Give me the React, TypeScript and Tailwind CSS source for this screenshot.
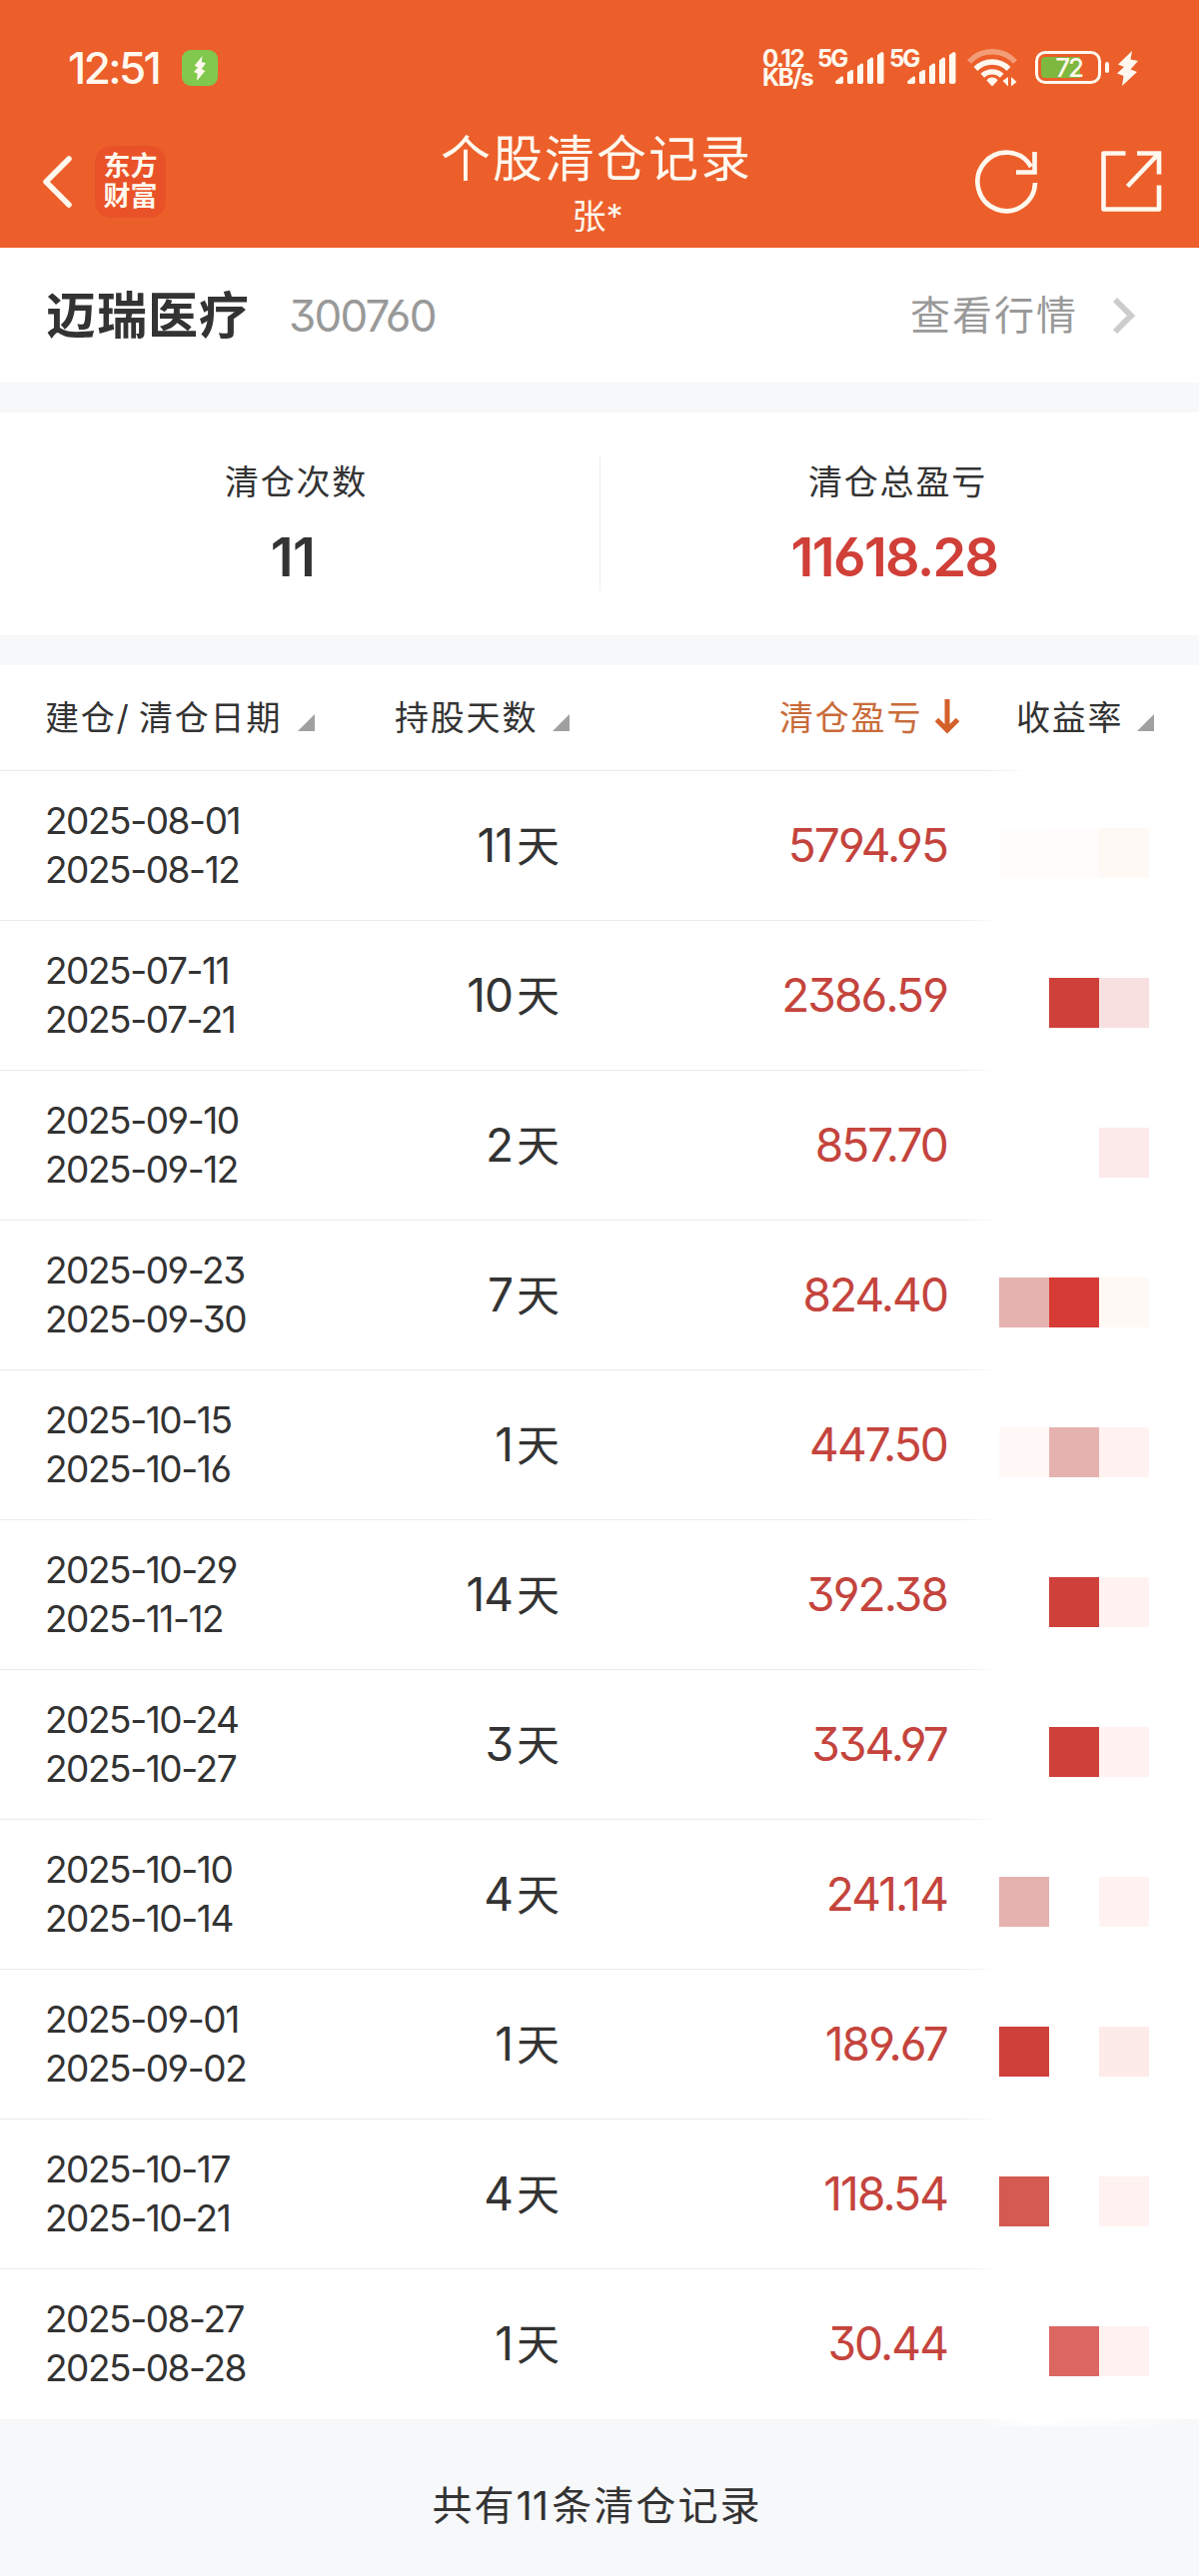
import { clsx } from "clsx";

interface ClearRecord {
    openDate: string;
    closeDate: string;
    days: number;
    profit: string;
    mask: [string, string, string];
}

const RECORDS: ClearRecord[] = [
    { openDate: "2025-08-01", closeDate: "2025-08-12", days: 11, profit: "5794.95", mask: ["bg-[#fffdfc]", "bg-[#fffcfb]", "bg-[#fff9f6]"] },
    { openDate: "2025-07-11", closeDate: "2025-07-21", days: 10, profit: "2386.59", mask: ["", "bg-[#cf403a]", "bg-[#f9e0e0]"] },
    { openDate: "2025-09-10", closeDate: "2025-09-12", days: 2, profit: "857.70", mask: ["", "", "bg-[#fdeaea]"] },
    { openDate: "2025-09-23", closeDate: "2025-09-30", days: 7, profit: "824.40", mask: ["bg-[#e5b3af]", "bg-[#d63c35]", "bg-[#fff9f6]"] },
    { openDate: "2025-10-15", closeDate: "2025-10-16", days: 1, profit: "447.50", mask: ["bg-[#fff8f6]", "bg-[#e6b2b0]", "bg-[#fff2f1]"] },
    { openDate: "2025-10-29", closeDate: "2025-11-12", days: 14, profit: "392.38", mask: ["", "bg-[#cf403a]", "bg-[#fff2f1]"] },
    { openDate: "2025-10-24", closeDate: "2025-10-27", days: 3, profit: "334.97", mask: ["", "bg-[#cf403a]", "bg-[#fff2f1]"] },
    { openDate: "2025-10-10", closeDate: "2025-10-14", days: 4, profit: "241.14", mask: ["bg-[#e6b2b0]", "", "bg-[#fff2f1]"] },
    { openDate: "2025-09-01", closeDate: "2025-09-02", days: 1, profit: "189.67", mask: ["bg-[#cf403a]", "", "bg-[#fdebea]"] },
    { openDate: "2025-10-17", closeDate: "2025-10-21", days: 4, profit: "118.54", mask: ["bg-[#d55a51]", "", "bg-[#fff2f0]"] },
    { openDate: "2025-08-27", closeDate: "2025-08-28", days: 1, profit: "30.44", mask: ["", "bg-[#db6662]", "bg-[#fff2f1]"] },
];

function SignalBars() {
    return (
        <svg width="49" height="32" viewBox="0 0 49 32" fill="currentColor" className="-ml-[11px] mt-[3px]">
            <path d="M0 29.5 L6 24.5 Q8 24 8 25.5 V30 Q8 32 6 32 H1.5 Q0 32 0 29.5Z" />
            <path d="M12 20.5 L16 18 Q18 17.5 18 19 V30 Q18 32 15 32 Q12 32 12 30Z" />
            <path d="M22 14.5 L26 11.5 Q28 11 28 13 V30 Q28 32 25 32 Q22 32 22 30Z" />
            <path d="M32 8.5 L36 5.5 Q38 5 38 7 V30 Q38 32 35 32 Q32 32 32 30Z" />
            <path d="M42 3 L46.5 0 Q48.5 0 48.5 2 V30 Q48.5 32 45 32 Q42 32 42 30Z" />
        </svg>
    );
}

function WifiIcon() {
    return (
        <svg width="51" height="38" viewBox="0 0 51 38" fill="none" stroke="currentColor" strokeWidth="5.4">
            <path d="M2 13 A31 31 0 0 1 48 13" opacity="0.4" />
            <path d="M8.5 20 A23 23 0 0 1 41.5 20" />
            <path d="M15.3 26.8 A14 14 0 0 1 34.7 26.8" />
            <path d="M25 28.5 Q29 28.5 30.5 31.5 L26 36.5 Q25 37.5 24 36.5 L19.5 31.5 Q21 28.5 25 28.5Z" fill="currentColor" stroke="none" />
            <path d="M41 28 V37.5 L35.5 32Z M44 37.5 V28 L49.5 33Z" fill="currentColor" stroke="none" />
        </svg>
    );
}

function Bolt({ className }: { className?: string }) {
    return (
        <svg viewBox="0 0 21 35" preserveAspectRatio="none" fill="currentColor" className={className}>
            <path d="M15 0 L1 13.5 L7 16 L0 22.5 L6.5 25 L5 35 L20 21 L13.5 18.5 L21 10 L13.5 8.5Z" />
        </svg>
    );
}

function StatusBar() {
    return (
        <div className="flex h-[96px] items-start pt-[49px] pl-[68px]">
            <div className="w-[114px] text-[44px] font-medium leading-[38px] tracking-[-2.6px]">12:51</div>
            <div className="mt-px flex h-9 w-[36px] items-center justify-center rounded-[9px] bg-[#80c94c]">
                <Bolt className="h-[25px] w-[12px]" />
            </div>
            <div className="ml-[545px] flex items-start">
                <div className="w-[55px] text-[24px] font-bold leading-[19px] tracking-[-1.4px]">
                    <div>0.12</div>
                    <div>KB/s</div>
                </div>
                <div className="flex w-[72px]">
                    <span className="w-[29px] text-[24px] font-bold leading-[20px] tracking-[-2px]">5G</span>
                    <SignalBars />
                </div>
                <div className="flex w-[78px]">
                    <span className="w-[29px] text-[24px] font-bold leading-[20px] tracking-[-2px]">5G</span>
                    <SignalBars />
                </div>
                <WifiIcon />
                <div className="mt-[2px] ml-[17px] flex h-[33px] w-[66px] items-center rounded-[10px] border-[3px] border-current p-[3px]">
                    <div className="flex h-full w-[39px] items-center justify-end rounded-l-[4px] bg-[#7fb83e]">
                        <span className="-mr-[2px] text-[26px] font-medium tracking-[-2px]">72</span>
                    </div>
                </div>
                <div className="mt-[13px] ml-[4px] h-[11px] w-[4px] rounded-sm bg-current" />
                <Bolt className="mt-[2px] ml-[8px] h-[35px] w-[21px]" />
            </div>
        </div>
    );
}

function NavBar() {
    return (
        <div className="flex h-[152px] items-start">
            <div className="flex w-[400px] items-center pt-[50px] pl-[42px]">
                <svg width="31" height="52" viewBox="0 0 31 52" fill="none" stroke="currentColor" strokeWidth="5.5" strokeLinecap="round" strokeLinejoin="round">
                    <path d="M27 3 L4 26 L27 49" />
                </svg>
                <div className="ml-[22px] flex h-[72px] w-[71px] items-center justify-center rounded-[16px] bg-[#e95228] text-[27px] font-bold leading-[30px]">
                    <div>
                        <div>东方</div>
                        <div>财富</div>
                    </div>
                </div>
            </div>
            <div className="w-[400px] pt-[33px] text-center">
                <div className="-mr-[2px] -ml-[8px] text-[50px] leading-[60px] tracking-[2px]">个股清仓记录</div>
                <div className="-ml-[4px] text-[34px] leading-[56px]">张*</div>
            </div>
            <div className="flex w-[400px] pt-[52px] pl-[176px]">
                <svg width="66" height="66" viewBox="0 0 66 66" fill="none" stroke="currentColor" strokeWidth="4.6">
                    <path d="M60 35 A28.8 29.3 0 1 1 56 19" />
                    <path d="M59.5 4 V24.5 H41" />
                </svg>
                <svg width="62" height="64" viewBox="0 0 62 64" fill="none" stroke="currentColor" strokeWidth="4.6" className="ml-[60px]">
                    <path d="M24.5 5.5 H2.5 V61.5 H58 V37.5" strokeLinejoin="round" />
                    <path d="M36 5.5 H58 V26.5 M57 6.5 L26.5 38.5" />
                </svg>
            </div>
        </div>
    );
}

function SortTriangle({ className }: { className?: string }) {
    return (
        <svg width="17" height="17" viewBox="0 0 17 17" className={className}>
            <path d="M17 0 V17 H0Z" fill="#a0a0a0" />
        </svg>
    );
}

interface StatProps {
    label: string;
    value: string;
    className: string;
    valueClassName: string;
}

function Stat({ label, value, className, valueClassName }: StatProps) {
    return (
        <div className={clsx("flex flex-col items-center pt-[3px]", className)}>
            <div className="text-[34px] leading-[44px] tracking-[1.8px]">{label}</div>
            <div className={clsx("mt-[17px] text-[54px] font-semibold leading-[72px]", valueClassName)}>
                {value}
            </div>
        </div>
    );
}

function RecordRow({ record, last }: { record: ClearRecord; last: boolean }) {
    return (
        <div className="relative flex h-[150px]">
            <div className="w-[300px] pt-[25px] pl-[45px] text-[37px] leading-[49px] tracking-[-1.45px]">
                <div>{record.openDate}</div>
                <div>{record.closeDate}</div>
            </div>
            <div className="flex w-[260px] items-baseline justify-end pt-[41px] text-[46px] leading-[66px]">
                <span className="tracking-[-1px]">{record.days}</span>
                <span className="ml-[4px] text-[43px]">天</span>
            </div>
            <div className="w-[388px] pt-[41px] text-right text-[46px] leading-[66px] tracking-[-1.9px] text-[#c4443d]">
                {record.profit}
            </div>
            <div className="ml-[52px] flex pt-[57px]">
                {record.mask.map((color, i) => (
                    <div key={i} className={clsx("size-[50px]", color)} />
                ))}
            </div>
            {!last && (
                <div className="absolute bottom-0 left-0 h-px w-[1000px] bg-linear-to-r from-[#ebebeb] from-96% to-white" />
            )}
        </div>
    );
}

export default function App() {
    return (
        <div className="h-[2579px] w-[1200px] overflow-hidden bg-[#f7f8fa] font-[Inter,'Noto_Sans_CJK_SC',sans-serif] whitespace-nowrap text-[#333] [font-feature-settings:'cv03','cv04','cv09']">
            <header className="h-[248px] bg-[#ec5f2b] text-[#fff8ee]">
                <StatusBar />
                <NavBar />
            </header>

            <section className="flex h-[135px] items-center bg-white pt-px pl-[46px]">
                <span className="text-[50px] font-bold tracking-[1px]">迈瑞医疗</span>
                <span className="ml-[39px] w-[160px] text-[44px] tracking-[-1.8px] text-[#999]">300760</span>
                <span className="ml-auto text-[40px] tracking-[2px] text-[#999]">查看行情</span>
                <svg width="24" height="38" viewBox="0 0 24 38" fill="none" stroke="#ccc" strokeWidth="6" className="mr-[63px] ml-[34px]">
                    <path d="M3 3 L19 19 L3 35" />
                </svg>
            </section>

            <section className="mt-[30px] flex h-[223px] items-start bg-white pt-[45px]">
                <Stat label="清仓次数" value="11" className="w-[593px]" valueClassName="-ml-[7px] tracking-[-0.5px]" />
                <div className="ml-[7px] h-[133px] w-px bg-[#eee]" />
                <Stat label="清仓总盈亏" value="11618.28" className="w-[595px]" valueClassName="-ml-[7px] tracking-[-1.6px] text-[#d03f38]" />
            </section>

            <section className="mt-[30px] bg-white">
                <div className="relative flex h-[106px] pt-[28px] text-[34px] leading-[50px] tracking-[1.8px]">
                    <div className="flex w-[395px] pl-[45px] [word-spacing:-3px]">
                        建仓/ 清仓日期
                        <SortTriangle className="mt-[21px] ml-[16px]" />
                    </div>
                    <div className="flex w-[385px]">
                        持股天数
                        <SortTriangle className="mt-[21px] ml-[15px]" />
                    </div>
                    <div className="flex w-[237px] text-[#c96b39]">
                        清仓盈亏
                        <svg width="26" height="36" viewBox="0 0 26 36" fill="none" stroke="#d4602a" strokeWidth="5" className="mt-[6px] ml-[12px]">
                            <path d="M13 0 V32 M2.5 20.5 L13 31 L23.5 20.5" />
                        </svg>
                    </div>
                    <div className="flex">
                        收益率
                        <SortTriangle className="mt-[21px] ml-[14px]" />
                    </div>
                    <div className="absolute bottom-0 left-0 h-px w-[1030px] bg-linear-to-r from-[#ebebeb] from-96% to-white" />
                </div>
                {RECORDS.map((record, i) => (
                    <RecordRow key={record.profit} record={record} last={i === RECORDS.length - 1} />
                ))}
            </section>

            <footer>
                <div className="ml-[980px] h-[7px] w-[210px] bg-linear-to-r from-transparent via-white via-25% to-transparent" />
                <div className="-ml-[5px] pt-[50px] text-center text-[40px] leading-[60px] tracking-[2.1px]">
                    共有<span className="mr-[3px] tracking-[0px]">11</span>条清仓记录
                </div>
            </footer>
        </div>
    );
}
